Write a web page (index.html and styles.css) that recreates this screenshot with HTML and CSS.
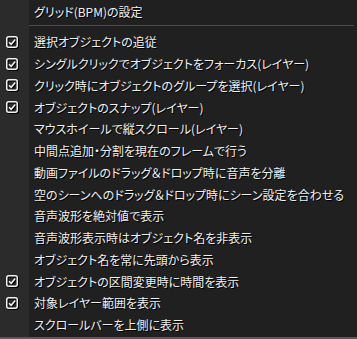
FILE: index.html
```html
<!DOCTYPE html>
<html lang="ja">
<head>
  <meta charset="UTF-8">
  <title>メニュー</title>
  <link rel="stylesheet" href="styles.css">
</head>
<body>
  <div class="menu">
    <div class="item head"><span class="icon"></span><span class="label">グリッド(BPM)の設定</span></div>
    <div class="sep"><span class="icon"></span><span class="line"></span></div>
    <div class="item"><span class="icon"><svg class="check" viewBox="0 0 12 12"><rect x="0.75" y="0.75" width="10.5" height="10.5" rx="2"/><path d="M3 6.2 L5.2 8.3 L9.2 3.6"/></svg></span><span class="label">選択オブジェクトの追従</span></div>
    <div class="item"><span class="icon"><svg class="check" viewBox="0 0 12 12"><rect x="0.75" y="0.75" width="10.5" height="10.5" rx="2"/><path d="M3 6.2 L5.2 8.3 L9.2 3.6"/></svg></span><span class="label">シングルクリックでオブジェクトをフォーカス(レイヤー)</span></div>
    <div class="item"><span class="icon"><svg class="check" viewBox="0 0 12 12"><rect x="0.75" y="0.75" width="10.5" height="10.5" rx="2"/><path d="M3 6.2 L5.2 8.3 L9.2 3.6"/></svg></span><span class="label">クリック時にオブジェクトのグループを選択(レイヤー)</span></div>
    <div class="item"><span class="icon"><svg class="check" viewBox="0 0 12 12"><rect x="0.75" y="0.75" width="10.5" height="10.5" rx="2"/><path d="M3 6.2 L5.2 8.3 L9.2 3.6"/></svg></span><span class="label">オブジェクトのスナップ(レイヤー)</span></div>
    <div class="item"><span class="icon"></span><span class="label">マウスホイールで縦スクロール(レイヤー)</span></div>
    <div class="item"><span class="icon"></span><span class="label">中間点追加・分割を現在のフレームで行う</span></div>
    <div class="item"><span class="icon"></span><span class="label">動画ファイルのドラッグ＆ドロップ時に音声を分離</span></div>
    <div class="item"><span class="icon"></span><span class="label">空のシーンへのドラッグ＆ドロップ時にシーン設定を合わせる</span></div>
    <div class="item"><span class="icon"></span><span class="label">音声波形を絶対値で表示</span></div>
    <div class="item"><span class="icon"></span><span class="label">音声波形表示時はオブジェクト名を非表示</span></div>
    <div class="item"><span class="icon"></span><span class="label">オブジェクト名を常に先頭から表示</span></div>
    <div class="item"><span class="icon"><svg class="check" viewBox="0 0 12 12"><rect x="0.75" y="0.75" width="10.5" height="10.5" rx="2"/><path d="M3 6.2 L5.2 8.3 L9.2 3.6"/></svg></span><span class="label">オブジェクトの区間変更時に時間を表示</span></div>
    <div class="item"><span class="icon"><svg class="check" viewBox="0 0 12 12"><rect x="0.75" y="0.75" width="10.5" height="10.5" rx="2"/><path d="M3 6.2 L5.2 8.3 L9.2 3.6"/></svg></span><span class="label">対象レイヤー範囲を表示</span></div>
    <div class="item"><span class="icon"></span><span class="label">スクロールバーを上側に表示</span></div>
  </div>
</body>
</html>
```
FILE: styles.css
```css
body {
  margin: 0;
  background: #202020;
  font-family: "Noto Sans CJK JP", "Noto Sans", sans-serif;
}
.menu {
  width: 357px;
  height: 339px;
  box-sizing: border-box;
  border-bottom: 2px solid #5a5a5a;
  background: linear-gradient(to right, #2b2b2b 29px, #202020 29px);
  display: flex;
  flex-direction: column;
}
.item {
  display: flex;
  align-items: center;
  height: 21.75px;
}
.item.head {
  height: 22px;
}
.icon {
  width: 29px;
  height: 100%;
  display: flex;
  align-items: center;
  padding-left: 6px;
  box-sizing: border-box;
}
.check {
  width: 12px;
  height: 12px;
  fill: none;
  stroke: #f2f2f2;
  stroke-width: 1.5;
  filter: drop-shadow(1px 1px 0 #000);
}
.label {
  padding-left: 5px;
  font-size: 12px;
  font-feature-settings: "palt";
  color: #f0f0f0;
  text-shadow: 1px 1px 0 #000;
  white-space: nowrap;
}
.sep {
  display: flex;
  align-items: center;
  height: 9px;
}
.sep .icon {
  height: 100%;
}
.sep .line {
  flex: 1;
  height: 1px;
  margin-right: 3px;
  margin-bottom: 3px;
  background: #4a4a4a;
}
```
